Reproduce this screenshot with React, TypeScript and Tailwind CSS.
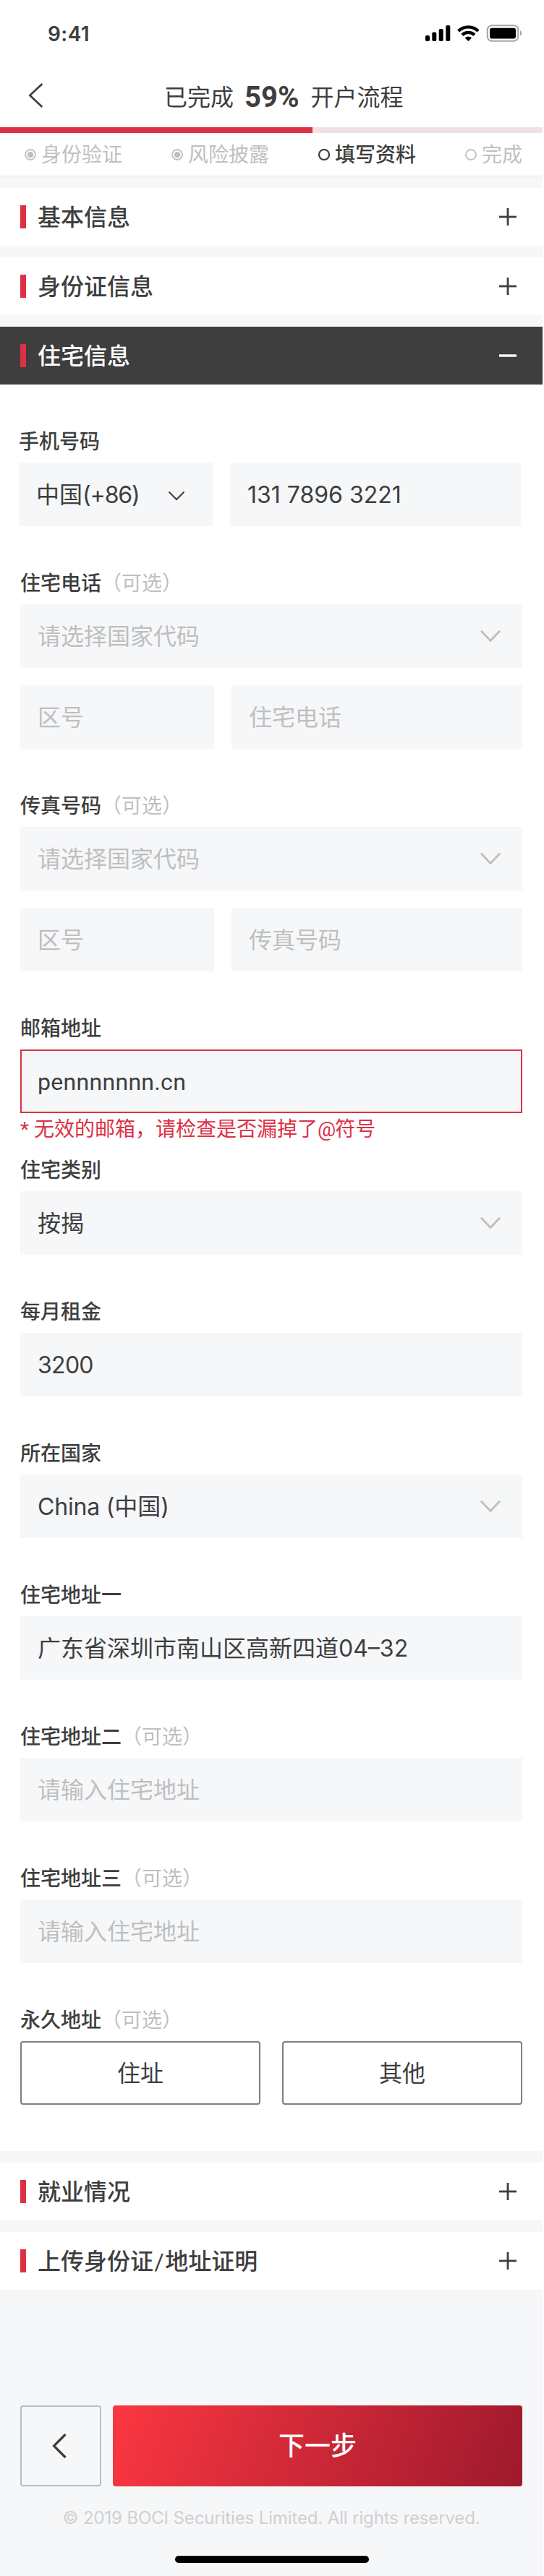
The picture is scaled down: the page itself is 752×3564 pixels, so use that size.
import React from 'react';
import type { ReactNode } from 'react';

function StatusBar() {
  return (
    <div className="flex h-[94px] items-center justify-between pr-7 pl-[66px]">
      <span className="font-['Inter'] text-[28px] leading-10 font-semibold tracking-[0.4px]">9:41</span>
      <svg className="mb-[2px] h-6 w-[134px]" viewBox="0 0 134 24" fill="none">
        <g fill="#000">
          <rect x="0" y="15" width="6" height="8" rx="2" />
          <rect x="9.3" y="10.5" width="6" height="12.5" rx="2" />
          <rect x="18.7" y="6" width="6" height="17" rx="2" />
          <rect x="28.3" y="1" width="6" height="22" rx="2" />
          <path d="M59.4 23 L54.7 18.4 A6.6 6.6 0 0 1 64.1 18.4 Z" />
        </g>
        <path d="M50.9 14.3 A12.2 12.2 0 0 1 67.9 14.3" stroke="#000" strokeWidth="4.4" />
        <path d="M45.7 9 A19.6 19.6 0 0 1 73.1 9" stroke="#000" strokeWidth="4.4" />
        <rect x="85.8" y="1.2" width="42.4" height="21.6" rx="6" stroke="#a6a6a6" strokeWidth="2" />
        <rect x="89" y="4.8" width="36" height="14.6" rx="3" fill="#000" />
        <path d="M131 8.3 C134 9.3 134 14.3 131 15.3 Z" fill="#a6a6a6" />
      </svg>
    </div>
  );
}

function Header() {
  return (
    <div className="flex h-[82px] items-start pt-5 pl-[39px]">
      <svg className="h-9 w-5" viewBox="0 0 20 36" fill="none" stroke="#3e3e3e" strokeWidth="2.6">
        <path d="M19.3 2 L2.3 18 L19.3 34" />
      </svg>
      <h1 className="mt-px ml-[168px] flex h-10 items-center text-[32px] leading-10">
        <span>已完成</span>
        <span className="mr-[16px] ml-[15px] font-['Roboto'] text-[40px] font-bold">59%</span>
        <span>开户流程</span>
      </h1>
    </div>
  );
}

type StepState = 'done' | 'active' | 'todo';

function Step({ label, state }: { label: string; state: StepState }) {
  return (
    <div
      className={
        state === 'active'
          ? 'flex items-center gap-[7px] text-[#3e3e3e]'
          : 'flex items-center gap-[7px] text-[#bfbfbf]'
      }
    >
      <svg className="size-4" viewBox="0 0 16 16" fill="none" stroke="currentColor">
        <circle cx="8" cy="8" r="7" strokeWidth={state === 'active' ? 2.2 : 1.8} />
        {state === 'done' && <circle cx="8" cy="8" r="4.3" fill="currentColor" stroke="none" />}
      </svg>
      <span className={state === 'active' ? 'font-medium' : 'font-normal'}>{label}</span>
    </div>
  );
}

function Steps() {
  return (
    <div className="flex h-[60px] gap-[68px] border-b border-[#e8e8e8] pl-[34px] text-[28px] leading-[60px]">
      <Step label="身份验证" state="done" />
      <Step label="风险披露" state="done" />
      <Step label="填写资料" state="active" />
      <Step label="完成" state="todo" />
    </div>
  );
}

function Section({ title, open = false }: { title: ReactNode; open?: boolean }) {
  return (
    <div
      className={
        open
          ? 'flex h-20 items-center bg-[#3e3e3e] px-7 text-white'
          : 'flex h-20 items-center bg-white px-7'
      }
    >
      <span className="h-8 w-2 bg-[#dc3145]" />
      <h2 className="ml-4 pt-px text-[32px] leading-10 font-medium">{title}</h2>
      <svg className="mr-2 ml-auto size-6" viewBox="0 0 24 24" stroke="currentColor" strokeWidth={open ? 3.4 : 2.8}>
        <path d="M0 12 H24" />
        {!open && <path d="M12 0 V24" />}
      </svg>
    </div>
  );
}

function Label({ children, optional = false }: { children: ReactNode; optional?: boolean }) {
  return (
    <div className="mb-[9px] h-10 text-[28px] leading-10">
      <span className="font-medium">{children}</span>
      {optional && <span className="text-[#bfbfbf]">（可选）</span>}
    </div>
  );
}

function Arrow() {
  return (
    <svg className="mr-[2px] h-[18px] w-[30px]" viewBox="0 0 30 18" fill="none" stroke="#bfbfbf" strokeWidth="2.9">
      <path d="M2 1.8 L15 15.4 L28 1.8" />
    </svg>
  );
}

function Field({ children, muted = false, select = false }: { children: ReactNode; muted?: boolean; select?: boolean }) {
  return (
    <div
      className={
        muted
          ? 'flex h-[88px] items-center justify-between bg-[#f5f7f9] pr-[27px] pl-6 text-[32px] leading-10 text-[#bfbfbf]'
          : 'flex h-[88px] items-center justify-between bg-[#f5f7f9] pr-[27px] pl-6 text-[32px] leading-10'
      }
    >
      <span className="pt-[2px]">{children}</span>
      {select && <Arrow />}
    </div>
  );
}

function PhoneGroup({ label, placeholder }: { label: string; placeholder: string }) {
  return (
    <div>
      <Label optional>{label}</Label>
      <Field muted select>请选择国家代码</Field>
      <div className="mt-6 grid grid-cols-[268px_402px] gap-6">
        <Field muted>区号</Field>
        <Field muted>{placeholder}</Field>
      </div>
    </div>
  );
}

function Form() {
  return (
    <div className="flex h-[2444px] flex-col gap-[59px] bg-white px-7 pt-[59px]">
      <div className="-ml-[2px] w-[694px]">
        <Label>手机号码</Label>
        <div className="grid grid-cols-[268px_402px] gap-6">
          <div className="flex h-[88px] items-center justify-between bg-[#f5f7f9] pr-[38px] pl-6 text-[32px] leading-10">
            <span className="pt-[2px]">
              中国<span className="tracking-[-1.1px]">(+86)</span>
            </span>
            <svg className="mt-[3px] h-[14px] w-6" viewBox="0 0 24 14" fill="none" stroke="#3e3e3e" strokeWidth="2">
              <path d="M1.5 1.5 L12 12 L22.5 1.5" />
            </svg>
          </div>
          <Field>131 7896 3221</Field>
        </div>
      </div>

      <PhoneGroup label="住宅电话" placeholder="住宅电话" />
      <PhoneGroup label="传真号码" placeholder="传真号码" />

      <div>
        <Label>邮箱地址</Label>
        <div className="flex h-[88px] items-center border-2 border-[#dc3145] bg-[#f5f7f9] pt-[2px] pl-[22px] font-['Roboto'] text-[32px] leading-10 tracking-[0.3px]">
          pennnnnnn.cn
        </div>
        <p className="-mb-[59px] h-[59px] pt-[3px] font-['Roboto','Noto_Sans_CJK_SC',sans-serif] text-[28px] leading-10 text-[#dc3145]">
          * 无效的邮箱，请检查是否漏掉了<span className="tracking-[-1px]">@</span>符号
        </p>
      </div>

      <div>
        <Label>住宅类别</Label>
        <Field select>按揭</Field>
      </div>
      <div>
        <Label>每月租金</Label>
        <Field>
          <span className="tracking-[-0.7px]">3200</span>
        </Field>
      </div>
      <div>
        <Label>所在国家</Label>
        <Field select>
          <span className="tracking-[-0.2px]">China (</span>中国)
        </Field>
      </div>
      <div>
        <Label>住宅地址一</Label>
        <Field>广东省深圳市南山区高新四道04–32</Field>
      </div>
      <div>
        <Label optional>住宅地址二</Label>
        <Field muted>请输入住宅地址</Field>
      </div>
      <div>
        <Label optional>住宅地址三</Label>
        <Field muted>请输入住宅地址</Field>
      </div>
      <div>
        <Label optional>永久地址</Label>
        <div className="grid grid-cols-2 gap-[30px] text-[32px] leading-10">
          <button className="h-[88px] rounded border-2 border-[#7f7f7f] pt-[2px]">住址</button>
          <button className="h-[88px] rounded border-2 border-[#7f7f7f] pt-[2px]">其他</button>
        </div>
      </div>
    </div>
  );
}

function Footer() {
  return (
    <footer className="flex flex-col items-center px-7 pt-40">
      <div className="flex w-full gap-4">
        <button className="flex h-28 w-28 items-center justify-center rounded border-2 border-[#bcbdbf]">
          <svg className="mr-[3px] h-9 w-[22px]" viewBox="0 0 22 36" fill="none" stroke="#3e3e3e" strokeWidth="3.2">
            <path d="M18.5 2 L2.5 18 L18.5 34" />
          </svg>
        </button>
        <button className="h-28 flex-1 rounded bg-[linear-gradient(110deg,#fb3741_0%,#9e192d_100%)] text-[36px] leading-10 font-medium text-white">
          下一步
        </button>
      </div>
      <p className="mt-[24px] text-[24px] leading-10 tracking-[-0.13px] whitespace-nowrap text-[#d0d0d0]">
        © 2019 BOCI Securities Limited. All rights reserved.
      </p>
      <div className="mt-8 ml-[2px] h-[10px] w-[268px] rounded-full bg-black" />
    </footer>
  );
}

export default function App() {
  return (
    <div className="h-[3564px] w-[750px] overflow-hidden bg-[#f5f7f9] font-['Inter','Noto_Sans_CJK_SC',sans-serif] text-[#3e3e3e]">
      <div className="bg-white">
        <StatusBar />
        <Header />
        <div className="h-2 bg-[#f2e1e4]">
          <div className="h-full w-[432px] bg-[#dc3145]" />
        </div>
        <Steps />
      </div>
      <div className="mt-4 flex flex-col gap-4">
        <Section title="基本信息" />
        <Section title="身份证信息" />
        <div>
          <Section title="住宅信息" open />
          <Form />
        </div>
        <Section title="就业情况" />
        <Section
          title={
            <>
              上传身份证<span className="mx-[1.5px] font-['Roboto'] font-normal">/</span>地址证明
            </>
          }
        />
      </div>
      <Footer />
    </div>
  );
}
